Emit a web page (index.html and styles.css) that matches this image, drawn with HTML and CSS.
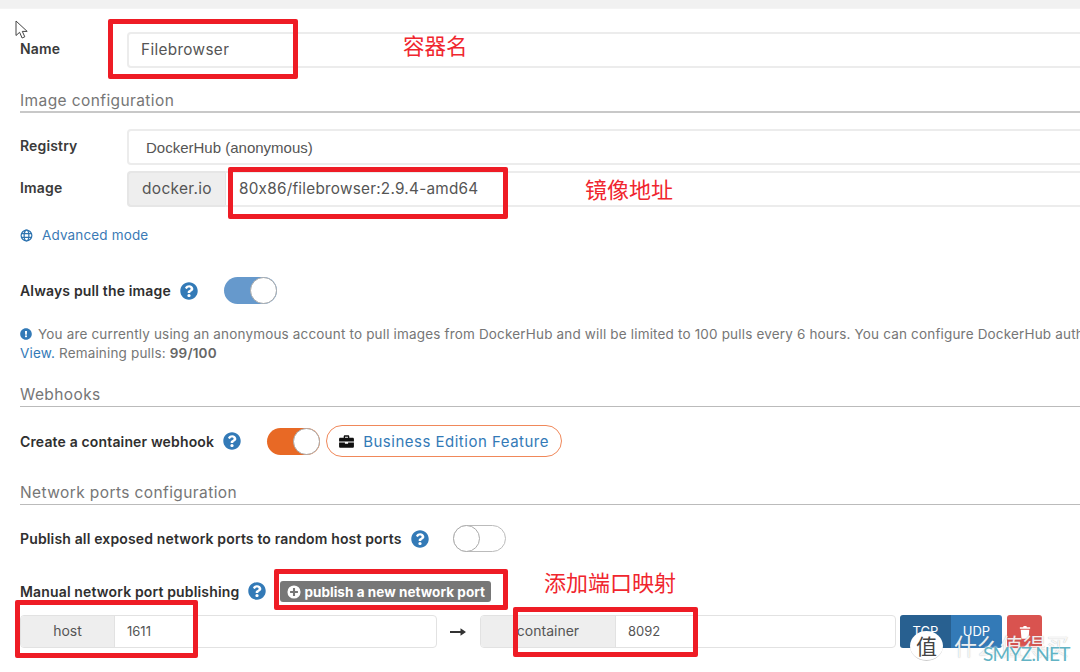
FILE: index.html
```html
<!DOCTYPE html>
<html lang="en">
<head>
<meta charset="utf-8">
<title>Create container</title>
<link rel="stylesheet" href="styles.css">
</head>
<body>
<svg class="defs" aria-hidden="true">
  <symbol id="q" viewBox="0 0 512 512"><path d="M504 256c0 136.997-111.043 248-248 248S8 392.997 8 256C8 119.083 119.043 8 256 8s248 111.083 248 248zM262.655 90c-54.497 0-89.255 22.957-116.549 63.758-3.536 5.286-2.353 12.415 2.715 16.258l34.699 26.31c5.205 3.947 12.621 3.008 16.665-2.122 17.864-22.658 30.113-35.797 57.303-35.797 20.429 0 45.698 13.148 45.698 32.958 0 14.976-12.363 22.667-32.534 33.976C247.128 238.528 216 254.941 216 296v4c0 6.627 5.373 12 12 12h56c6.627 0 12-5.373 12-12v-1.333c0-28.462 83.186-29.647 83.186-106.667 0-58.002-60.165-102-116.531-102zM256 338c-25.365 0-46 20.635-46 46 0 25.364 20.635 46 46 46s46-20.636 46-46c0-25.365-20.635-46-46-46z"/></symbol>
</svg>
<div class="topbar"></div>
<main class="form">
  <div class="row row-name">
    <label class="label label-name">Name</label>
    <div class="field">Filebrowser</div>
  </div>

  <h2 class="section section-image">Image configuration</h2>

  <div class="row row-registry">
    <label class="label label-registry">Registry</label>
    <div class="field field-select">DockerHub (anonymous)</div>
  </div>
  <div class="row row-image">
    <label class="label label-image">Image</label>
    <div class="addon addon-docker">docker.io</div>
    <div class="field field-joined">80x86/filebrowser:2.9.4-amd64</div>
  </div>

  <a class="advanced">
    <svg class="globe" viewBox="0 0 16 16"><circle cx="8" cy="8" r="6.6"/><ellipse cx="8" cy="8" rx="2.9" ry="6.6"/><path d="M1.4 5.6h13.2M1.4 10.4h13.2"/></svg>
    <span>Advanced mode</span>
  </a>

  <div class="row row-pull">
    <span class="strong">Always pull the image</span>
    <svg class="help"><use href="#q"/></svg>
    <span class="toggle toggle-blue"><i></i></span>
  </div>

  <div class="info">
    <p>
      <svg class="info-icon" viewBox="0 0 512 512"><path d="M504 256c0 136.997-111.043 248-248 248S8 392.997 8 256C8 119.083 119.043 8 256 8s248 111.083 248 248zm-248 50c-25.405 0-46 20.595-46 46s20.595 46 46 46 46-20.595 46-46-20.595-46-46-46zm-43.673-165.346l7.418 136c.347 6.364 5.609 11.346 11.982 11.346h48.546c6.373 0 11.635-4.982 11.982-11.346l7.418-136c.375-6.874-5.098-12.654-11.982-12.654h-63.383c-6.884 0-12.356 5.78-11.981 12.654z"/></svg>
      You are currently using an anonymous account to pull images from DockerHub and will be limited to 100 pulls every 6 hours. You can configure DockerHub auth
    </p>
    <p><a class="link">View.</a> Remaining pulls: <b>99/100</b></p>
  </div>

  <h2 class="section section-webhooks">Webhooks</h2>

  <div class="row row-webhook">
    <span class="strong">Create a container webhook</span>
    <svg class="help"><use href="#q"/></svg>
    <span class="toggle toggle-orange"><i></i></span>
    <span class="pill">
      <svg class="case" viewBox="0 0 16 14"><path d="M5 3V1.6C5 .9 5.6.4 6.2.4h3.6c.6 0 1.2.5 1.2 1.2V3h3.6c.7 0 1.4.6 1.4 1.4V7H0V4.400C0 3.600.7 3 1.400 3zm1.400 0h3.200V1.800H6.400zM0 8h6.300v1.300h3.400V8H16v4.300c0 .8-.6 1.400-1.400 1.400H1.400C.6 13.700 0 13.100 0 12.300z"/></svg>
      Business Edition Feature
    </span>
  </div>

  <h2 class="section section-network">Network ports configuration</h2>

  <div class="row row-publish">
    <span class="strong">Publish all exposed network ports to random host ports</span>
    <svg class="help"><use href="#q"/></svg>
    <span class="toggle toggle-off"><i></i></span>
  </div>

  <div class="row row-manual">
    <span class="strong">Manual network port publishing</span>
    <svg class="help"><use href="#q"/></svg>
    <span class="btn-add">
      <svg class="plus" viewBox="0 0 16 16"><path fill-rule="evenodd" d="M8 .5a7.500 7.500 0 1 0 0 15 7.500 7.500 0 0 0 0-15zM6.800 3.500h2.400v3.300h3.300v2.400H9.200v3.300H6.800V9.200H3.500V6.800h3.300z"/></svg>
      publish a new network port
    </span>
  </div>

  <div class="ports">
    <div class="port-group port-group-host">
      <span class="port-addon port-addon-host">host</span>
      <span class="port-input">1611</span>
    </div>
    <svg class="arrow" viewBox="0 0 16 10"><path d="M0 4h10.500V1.200L16 5l-5.500 3.800V6H0z"/></svg>
    <div class="port-group">
      <span class="port-addon port-addon-container">container</span>
      <span class="port-input">8092</span>
    </div>
    <div class="proto">
      <span class="proto-btn proto-active">TCP</span>
      <span class="proto-btn">UDP</span>
    </div>
    <span class="trash">
      <svg viewBox="0 0 14 16"><path d="M1 2.500h3.800L5.400 1h3.200l.6 1.500H13v1.800H1zM2 5.300h10l-.8 9.700c0 .5-.4.800-.8.800H3.600c-.4 0-.8-.3-.8-.8z"/></svg>
    </span>
  </div>
</main>

<svg class="cursor" viewBox="0 0 14 20"><path d="M1 1v14.500l3.600-3.200 2.500 5.700 2.700-1.200-2.500-5.400h4.900z"/></svg>

<span class="mark mark-1"></span>
<span class="mark mark-2"></span>
<span class="mark mark-3"></span>
<span class="mark mark-4"></span>
<span class="mark mark-5"></span>

<span class="note note-name">容器名</span>
<span class="note note-image">镜像地址</span>
<span class="note note-port">添加端口映射</span>

<div class="watermark">
  <span class="wm-cn">什么值得买</span>
  <span class="wm-badge">值</span>
  <span class="wm-en">SMYZ.NET</span>
</div>
</body>
</html>
```
FILE: styles.css
```css
* { box-sizing: border-box; }
html, body { height: 100%; }
body {
  margin: 0;
  width: 1080px;
  height: 672px;
  overflow: hidden;
  position: relative;
  background: #fff;
  color: #333;
  font-family: Inter, "Open Sans", "Liberation Sans", sans-serif;
  font-feature-settings: "calt" 0;
  font-size: 14px;
}
.defs { position: absolute; width: 0; height: 0; }
.topbar { height: 9px; background: #f1f1f1; border-bottom: 1px solid #f4f4f4; }
.form { width: 1140px; padding-left: 20px; }

.row { display: flex; align-items: center; }
.label { width: 107px; font-weight: 600; color: #3a3a3a; font-size: 14px; letter-spacing: .15px; }
.label-name { margin-bottom: 4px; }
.label-registry { margin-bottom: 4px; }
.label-image { margin-bottom: 4px; }
.field {
  flex: 1;
  height: 36px;
  line-height: 32px;
  padding-left: 12px;
  border: 2px solid #ececec;
  border-radius: 4px;
  font-size: 15.300px;
  letter-spacing: .35px;
  color: #555;
  background: #fff;
}
.field-select {
  padding-left: 17px;
  line-height: 34px;
  font-family: "Liberation Sans", sans-serif;
  font-size: 15px;
  letter-spacing: 0;
}
.field-joined {
  border-left: 1px solid #e4e4e4;
  border-radius: 0 4px 4px 0;
  padding-left: 13px;
  letter-spacing: .25px;
}
.addon {
  height: 36px;
  line-height: 32px;
  border: 2px solid #e6e6e6;
  border-right: 0;
  background: #eee;
  border-radius: 4px 0 0 4px;
  color: #555;
  font-size: 15.500px;
  letter-spacing: .3px;
}
.addon-docker { width: 98px; text-align: center; }

.row-name { margin-top: 23px; }
.row-registry { margin-top: 16px; }
.row-image { margin-top: 6px; }
.row-pull { margin-top: 32px; height: 27px; }
.row-webhook { margin-top: 18px; height: 32px; }
.row-publish { margin-top: 20px; height: 27px; }
.row-manual { margin-top: 28px; height: 22px; }

.section {
  margin: 0;
  height: 25px;
  font-size: 15.500px;
  letter-spacing: .4px;
  line-height: 26px;
  font-weight: 400;
  color: #767676;
  border-bottom: 1px solid #bbb;
}
.section-image { margin-top: 20px; border-bottom: 2px solid #c8c8c8; }
.section-webhooks { margin-top: 19px; }
.section-network { margin-top: 23px; }

.advanced {
  display: flex;
  align-items: center;
  gap: 9px;
  margin-top: 18px;
  height: 20px;
  color: #3a7ab5;
  font-size: 13.500px;
  letter-spacing: .15px;
}
.globe { width: 13px; height: 13px; fill: #fff; stroke: #2f74b0; stroke-width: 1.500; }

.strong { font-weight: 600; font-size: 14px; letter-spacing: .15px; color: #2f2f2f; }
.help { width: 18px; height: 18px; fill: #337ab7; margin-left: 9px; flex: none; }

.toggle {
  position: relative;
  display: block;
  width: 53px;
  height: 27px;
  border-radius: 14px;
  flex: none;
}
.toggle i {
  position: absolute;
  top: 0;
  right: 0;
  width: 27px;
  height: 27px;
  border-radius: 50%;
  background: #fff;
  border: 1px solid #aaa;
}
.toggle-blue { background: #6699cc; margin-left: 26px; }
.toggle-orange { background: #e86925; margin-left: 26px; }
.toggle-off { background: #fff; border: 1px solid #bbb; margin-left: 24px; }
.toggle-off i { left: -1px; right: auto; top: -1px; }

.info { margin-top: 21px; font-size: 13.500px; letter-spacing: .17px; line-height: 19px; color: #767676; }
.info p { margin: 0; white-space: nowrap; }
.info b { font-weight: 600; color: #666; }
.link { color: #337ab7; }
.info-icon { width: 12px; height: 12px; fill: #337ab7; vertical-align: -1px; margin-right: 2px; }

.pill {
  display: flex;
  align-items: center;
  gap: 9px;
  width: 236px;
  height: 32px;
  margin-left: 6px;
  padding-left: 12px;
  border: 1px solid #f0885a;
  border-radius: 16px;
  color: #337ab7;
  font-size: 15px;
  letter-spacing: .5px;
  flex: none;
}
.case { width: 15px; height: 13px; fill: #111; flex: none; }

.btn-add {
  display: flex;
  align-items: center;
  gap: 3px;
  width: 211px;
  height: 21px;
  margin: 1px 0 0 14px;
  padding-left: 7px;
  border-radius: 3px;
  background: #777;
  color: #fff;
  font-weight: 700;
  font-size: 13.500px;
  letter-spacing: .05px;
  white-space: nowrap;
}
.plus { width: 14px; height: 14px; fill: #fff; flex: none; }

.ports { display: flex; align-items: center; margin-top: 13px; width: 1023px; height: 33px; }
.port-group {
  display: flex;
  width: 416px;
  height: 33px;
  border: 1px solid #e2e2e2;
  border-radius: 4px;
  overflow: hidden;
  flex: none;
}
.port-group-host { width: 417px; }
.port-addon {
  background: #eee;
  color: #555;
  font-size: 14px;
  line-height: 30px;
  text-align: center;
  border-right: 1px solid #e2e2e2;
}
.port-addon-host { width: 94px; }
.port-addon-container { width: 135px; }
.port-input { padding-left: 12px; line-height: 31px; color: #555; font-size: 13px; }
.arrow { width: 16px; height: 10px; margin: 0 14px 0 13px; fill: #333; flex: none; }
.proto { display: flex; margin-left: 4px; height: 33px; flex: none; }
.proto-btn {
  width: 51px;
  line-height: 33px;
  text-align: center;
  color: #fff;
  background: #337ab7;
  font-size: 13px;
}
.proto-btn:first-child { border-radius: 3px 0 0 3px; }
.proto-btn:last-child { border-radius: 0 3px 3px 0; }
.proto-active { background: #286090; }
.trash {
  display: flex;
  align-items: center;
  justify-content: center;
  width: 35px;
  height: 33px;
  margin-left: 5px;
  border-radius: 3px;
  background: #d9534f;
  flex: none;
}
.trash svg { width: 12px; height: 14px; fill: #fff; }

.cursor {
  position: absolute;
  left: 15px;
  top: 20px;
  width: 14px;
  height: 20px;
  fill: #fff;
  stroke: #444;
  stroke-width: 1;
}

.mark { position: absolute; border: 5px solid #ee1c25; border-radius: 2px; }
.mark-1 { left: 108px; top: 19px; width: 190px; height: 60px; }
.mark-2 { left: 228px; top: 167px; width: 280px; height: 52px; }
.mark-3 { left: 274px; top: 569px; width: 234px; height: 41px; }
.mark-4 { left: 15px; top: 600px; width: 183px; height: 58px; }
.mark-5 { left: 513px; top: 607px; width: 185px; height: 50px; }

.note {
  position: absolute;
  font-family: "Noto Sans CJK SC", sans-serif;
  font-size: 21.500px;
  line-height: 28px;
  color: #f0262e;
  white-space: nowrap;
}
.note-name { left: 403px; top: 31px; }
.note-image { left: 585px; top: 174px; font-size: 22px; }
.note-port { left: 544px; top: 567px; font-size: 22px; }

.watermark { position: absolute; left: 910px; top: 628px; width: 165px; height: 40px; }
.wm-badge {
  position: absolute;
  left: 0;
  top: 3px;
  width: 33px;
  height: 30px;
  border-radius: 50%;
  background: #fff;
  border-bottom: 1px solid #ccc;
  color: #444;
  font: 21px/28px "Noto Sans CJK SC", sans-serif;
  text-align: center;
}
.wm-cn {
  position: absolute;
  left: 44px;
  top: 3px;
  font: 23px/28px "Noto Sans CJK SC", sans-serif;
  color: rgba(255, 255, 255, 0.9);
  text-shadow: 0 0 1px rgba(120, 120, 120, 0.6);
  white-space: nowrap;
}
.wm-en {
  position: absolute;
  left: 73px;
  top: 15px;
  font: 19px/22px Lato, "Liberation Sans", sans-serif;
  letter-spacing: -.7px;
  color: #62b3c4;
  white-space: nowrap;
  text-shadow: 0 0 2px #fff, 0 0 2px #fff;
}
```
